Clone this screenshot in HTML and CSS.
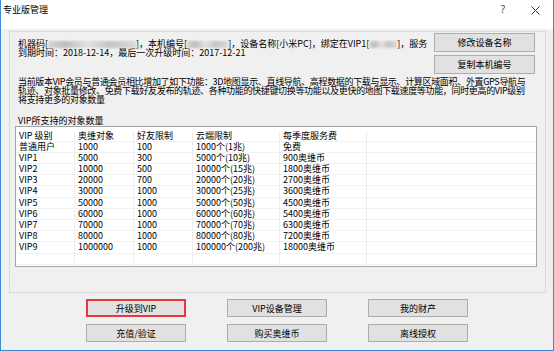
FILE: index.html
```html
<!DOCTYPE html>
<html lang="zh-CN">
  <head>
    <meta charset="UTF-8" />
    <meta name="viewport" content="width=device-width, initial-scale=1.0" />
    <title>专业版管理</title>
    <link rel="stylesheet" href="styles.css">
  </head>
  <body>
    <div class="window">
      <!-- Title bar -->
      <div class="titlebar">
        <span class="title">专业版管理</span>
        <span class="help">?</span>
        <span class="close">
          <svg width="9" height="9" viewBox="0 0 9 9">
            <path d="M0.5 0.5 L8.5 8.5 M8.5 0.5 L0.5 8.5" stroke="#333" stroke-width="1" fill="none" />
          </svg>
        </span>
      </div>

      <div class="content">
        <div class="group">
          <div class="top">
            <div class="info">
              <p>机器码[<span class="mask w1"></span>]，本机编号[<span class="mask w2"></span>]，设备名称[小米PC]，绑定在VIP1[<span class="mask w3"></span>]，服务</p>
              <p>到期时间：2018-12-14，最后一次升级时间：2017-12-21</p>
            </div>
            <div class="side-buttons">
              <button>修改设备名称</button>
              <button>复制本机编号</button>
            </div>
          </div>

          <p class="desc">
            当前版本VIP会员与普通会员相比增加了如下功能：3D地图显示、直线导航、高程数据的下载与显示、计算区域面积、外置GPS导航与<br>
            轨迹、对象批量修改、免费下载好友发布的轨迹、各种功能的快捷键切换等功能以及更快的地图下载速度等功能，同时更高的VIP级别<br>
            将支持更多的对象数量
          </p>

          <p class="label">VIP所支持的对象数量</p>

          <!-- Level list -->
          <div class="list" id="levelList"></div>
        </div>

        <div class="actions">
          <button class="marked">升级到VIP</button>
          <button>VIP设备管理</button>
          <button>我的财产</button>
          <button>充值/验证</button>
          <button>购买奥维币</button>
          <button>离线授权</button>
        </div>
      </div>
    </div>

    <script>
      // VIP level data
      const levels = [
        ["VIP 级别", "奥维对象", "好友限制", "云端限制", "每季度服务费"],
        ["普通用户", "1000", "100", "1000个(1兆)", "免费"],
        ["VIP1", "5000", "300", "5000个(10兆)", "900奥维币"],
        ["VIP2", "10000", "500", "10000个(15兆)", "1800奥维币"],
        ["VIP3", "20000", "700", "20000个(20兆)", "2700奥维币"],
        ["VIP4", "30000", "1000", "30000个(25兆)", "3600奥维币"],
        ["VIP5", "50000", "1000", "50000个(50兆)", "4500奥维币"],
        ["VIP6", "60000", "1000", "60000个(60兆)", "5400奥维币"],
        ["VIP7", "70000", "1000", "70000个(70兆)", "6300奥维币"],
        ["VIP8", "80000", "1000", "80000个(80兆)", "7200奥维币"],
        ["VIP9", "1000000", "1000", "100000个(200兆)", "18000奥维币"],
        ["", "", "", "", ""],
      ];

      function renderList() {
        const list = document.getElementById("levelList");
        list.innerHTML = "";
        levels.forEach((cells) => {
          const row = document.createElement("div");
          row.className = "row";
          row.innerHTML =
            cells.map((c) => `<span class="cell">${c}</span>`).join("") +
            `<span class="cell last"></span>`;
          list.appendChild(row);
        });
        const filler = document.createElement("div");
        filler.className = "row filler";
        filler.innerHTML =
          '<span class="cell"></span>'.repeat(5) + '<span class="cell last"></span>';
        list.appendChild(filler);
      }

      renderList();
    </script>
  </body>
</html>
```

FILE: styles.css
```css
* {
  box-sizing: border-box;
}
body {
  margin: 0;
  padding: 0;
  font-family: "Noto Sans CJK SC", "Noto Sans", sans-serif;
  font-size: 9px;
  color: #000;
  background: #fff;
}
p {
  margin: 0;
}
.window {
  width: 554px;
  height: 351px;
  border: 1px solid #3c8ad6;
  border-top: none;
  background: #f0f0f0;
  display: flex;
  flex-direction: column;
}
.titlebar {
  height: 29px;
  background: #fff;
  display: flex;
  align-items: flex-start;
  padding: 5px 13px 0 2px;
  line-height: 10px;
}
.title {
  flex: 1;
  font-size: 9px;
}
.help {
  color: #444;
  font-family: "Noto Sans", sans-serif;
  font-size: 10px;
  margin-right: 26px;
  margin-top: -1px;
}
.close {
  margin-top: 1px;
  display: flex;
}
.content {
  flex: 1;
  padding: 2px 7px 0 8px;
}
.group {
  height: 262px;
  border: 1px solid #d9d9d9;
}
.top {
  display: flex;
  padding: 1px 10px 0 8px;
}
.info {
  flex: 1;
  margin-top: 6px;
  line-height: 9px;
  white-space: nowrap;
}
.mask {
  display: inline-block;
  height: 7px;
  vertical-align: -1px;
  background: linear-gradient(90deg, #d6d6d6, #bdbdbd 20%, #e2e2e2 45%, #c4c4c4 70%, #dadada);
  filter: blur(1px);
}
.mask.w1 {
  width: 88px;
}
.mask.w2 {
  width: 41px;
}
.mask.w3 {
  width: 28px;
}
button {
  font-family: inherit;
  font-size: 9px;
  color: #000;
  background: #e1e1e1;
  border: 1px solid #adadad;
  padding: 0;
  cursor: pointer;
}
.side-buttons {
  display: flex;
  flex-direction: column;
  gap: 3px;
}
.side-buttons button {
  width: 101px;
  height: 19px;
}
.desc {
  margin: 3px 0 0 8px;
  line-height: 9px;
  letter-spacing: -0.33px;
  white-space: nowrap;
}
.label {
  margin: 12px 0 0 8px;
  line-height: 9px;
}
.list {
  margin: 1px 0 0 5px;
  width: 522px;
  height: 141px;
  border: 1px solid #a5a5a5;
  background: #fff;
  padding-top: 3.5px;
  display: flex;
  flex-direction: column;
}
.row {
  display: grid;
  grid-template-columns: 59px 59px 59px 87px 87px 1fr;
  height: 11.2px;
  border-bottom: 1px solid #f2f2f2;
  line-height: 10px;
  white-space: nowrap;
}
.row.filler {
  flex: 1;
  border-bottom: none;
}
.cell {
  padding-left: 3px;
  border-right: 1px solid #ededed;
}
.cell.last {
  border-right: none;
}
.actions {
  display: grid;
  grid-template-columns: repeat(3, 100px);
  column-gap: 41px;
  row-gap: 7px;
  justify-content: center;
  margin-top: 6px;
  padding-right: 1px;
}
.actions button {
  height: 18px;
}
.actions button.marked {
  border: 2px solid #e8383d;
}
```
